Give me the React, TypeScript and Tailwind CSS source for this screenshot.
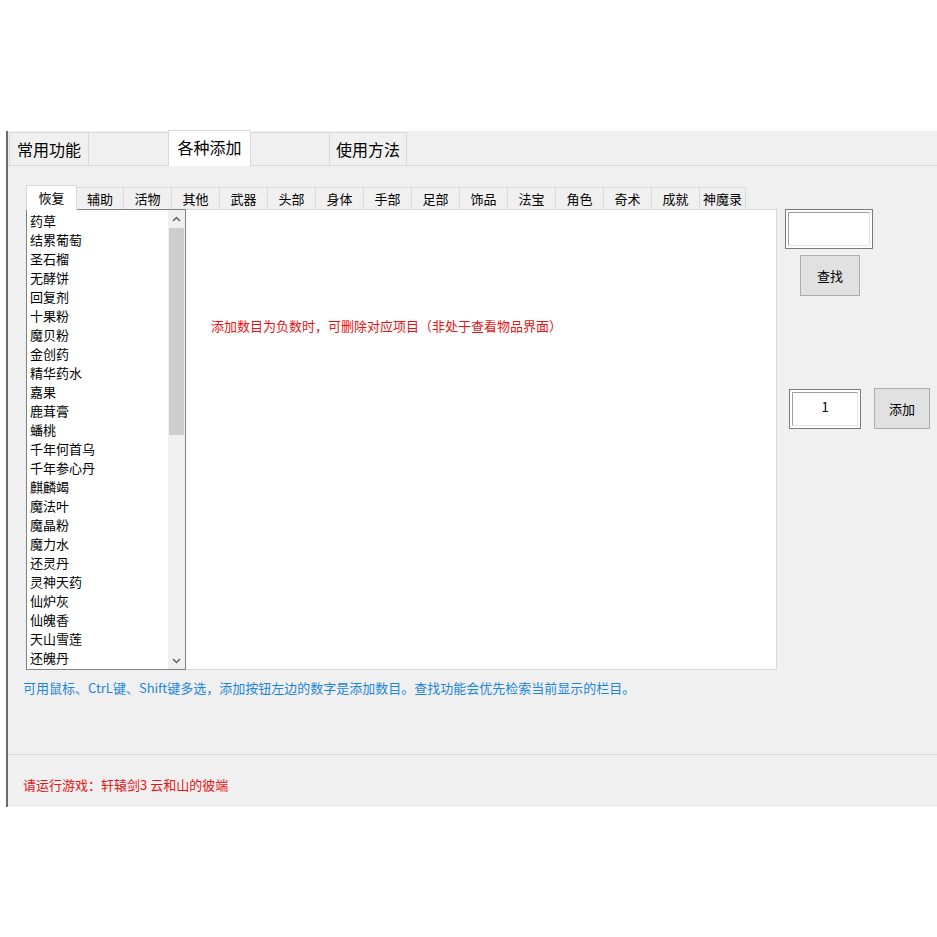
import React from "react";

const mainTabs = [
  { label: "常用功能", w: "w-[80px]", selected: false },
  { label: "", w: "w-[81px]", selected: false },
  { label: "各种添加", w: "w-[83px]", selected: true },
  { label: "", w: "w-[80px]", selected: false },
  { label: "使用方法", w: "w-[78px]", selected: false },
];

const subTabs = [
  "辅助",
  "活物",
  "其他",
  "武器",
  "头部",
  "身体",
  "手部",
  "足部",
  "饰品",
  "法宝",
  "角色",
  "奇术",
  "成就",
  "神魔录",
];

const items = [
  "药草",
  "结累葡萄",
  "圣石榴",
  "无酵饼",
  "回复剂",
  "十果粉",
  "魔贝粉",
  "金创药",
  "精华药水",
  "嘉果",
  "鹿茸膏",
  "蟠桃",
  "千年何首乌",
  "千年参心丹",
  "麒麟竭",
  "魔法叶",
  "魔晶粉",
  "魔力水",
  "还灵丹",
  "灵神天药",
  "仙炉灰",
  "仙魄香",
  "天山雪莲",
  "还魄丹",
];

function Chevron({ up }: { up?: boolean }) {
  return (
    <svg width="9" height="6" viewBox="0 0 9 6">
      <polyline
        points={up ? "1,5 4.5,1.5 8,5" : "1,1 4.5,4.5 8,1"}
        fill="none"
        stroke="#606060"
        strokeWidth="1.5"
      />
    </svg>
  );
}

// sunken 3D text box
function TextBox({ w, h, value }: { w: string; h: string; value?: string }) {
  return (
    <div className={`${w} ${h} border border-[#7a7a7a] bg-white p-[2px]`}>
      <div className="h-full w-full border-t border-l border-[#a0a0a0] border-b border-r border-b-[#e3e3e3] border-r-[#e3e3e3] flex justify-center pt-[5px] text-[13px] leading-[17px] text-black">
        {value}
      </div>
    </div>
  );
}

export default function App() {
  return (
    <div className="w-[937px] h-[937px] bg-white font-['Noto_Sans_CJK_SC','Noto_Sans',sans-serif] overflow-hidden">
      <div className="h-[131px]" />
      <div className="ml-[6px] h-[676px] border-l-2 border-[#6b6b6b] bg-[#f0f0f0] flex flex-col">
        {/* main tabs */}
        <div className="h-[35px] flex items-end pl-[1px] border-b border-[#d9d9d9] shrink-0">
          {mainTabs.map((t, i) => (
            <div
              key={i}
              className={`${t.w} ${i > 0 ? "-ml-px" : ""} ${
                t.selected
                  ? "h-[36px] -mb-px bg-white relative z-10 pb-[3px]"
                  : "h-[33px] bg-[#f0f0f0]"
              } border-t border-l border-r border-[#d9d9d9] flex items-center justify-center text-[16px] text-black`}
            >
              {t.label}
            </div>
          ))}
        </div>

        {/* tab page */}
        <div className="h-[588px] shrink-0 pt-[18px]">
          <div className="flex pl-[18px]">
            <div className="w-[751px]">
              <div className="h-[25px] flex items-end">
                <div className="w-[51px] h-[25px] bg-white border-t border-l border-r border-[#d9d9d9] flex items-center justify-center text-[13px] text-black relative z-10 -mb-px">
                  恢复
                </div>
                {subTabs.map((t, i) => (
                  <div
                    key={t}
                    className={`${
                      i === 0 ? "w-[48px]" : i === subTabs.length - 1 ? "w-[47px]" : "w-[49px]"
                    } -ml-px h-[22px] bg-[#f0f0f0] border-t border-l border-r border-[#d9d9d9] flex items-center justify-center text-[13px] text-black`}
                  >
                    {t}
                  </div>
                ))}
              </div>
              <div className="h-[461px] flex bg-white border-y border-r border-[#d9d9d9]">
                {/* list box */}
                <div className="w-[160px] -my-px border border-[#828282] flex bg-white">
                  <div className="flex-1 pl-[3px] pt-[1px]">
                    {items.map((it) => (
                      <div key={it} className="h-[19px] leading-[19px] text-[13px] text-black whitespace-nowrap">
                        {it}
                      </div>
                    ))}
                  </div>
                  <div className="w-[17px] bg-[#f0f0f0] flex flex-col">
                    <div className="h-[17px] flex items-center justify-center">
                      <Chevron up />
                    </div>
                    <div className="mx-[1px] mt-[1px] h-[207px] bg-[#cdcdcd]" />
                    <div className="flex-1" />
                    <div className="h-[17px] flex items-center justify-center">
                      <Chevron />
                    </div>
                  </div>
                </div>
                <div className="pl-[25px] pt-[107px] text-[13px] leading-[18px] text-[#e81313] whitespace-nowrap">
                  添加数目为负数时，可删除对应项目（非处于查看物品界面）
                </div>
              </div>
            </div>

            {/* right column */}
            <div className="ml-[8px] mt-[25px] flex flex-col">
              <TextBox w="w-[88px]" h="h-[40px]" />
              <button className="ml-[15px] mt-[6px] w-[60px] h-[41px] bg-[#e1e1e1] border border-[#adadad] text-[13px] text-black">
                查找
              </button>
              <div className="mt-[92px] flex items-start">
                <div className="ml-[4px] mt-[1px]">
                  <TextBox w="w-[72px]" h="h-[40px]" value="1" />
                </div>
                <button className="ml-[13px] w-[56px] h-[41px] bg-[#e1e1e1] border border-[#adadad] text-[13px] text-black">
                  添加
                </button>
              </div>
            </div>
          </div>
          <div className="pl-[15px] mt-[9px] text-[13px] leading-[18px] text-[#1c86dd] whitespace-nowrap">
            可用鼠标、CtrL键、Shift键多选，添加按钮左边的数字是添加数目。查找功能会优先检索当前显示的栏目。
          </div>
        </div>

        {/* status */}
        <div className="flex-1 border-t border-[#d9d9d9] pl-[15px] pt-[21px] text-[13px] leading-[18px] text-[#e81313]">
          请运行游戏：轩辕剑3 云和山的彼端
        </div>
      </div>
    </div>
  );
}
